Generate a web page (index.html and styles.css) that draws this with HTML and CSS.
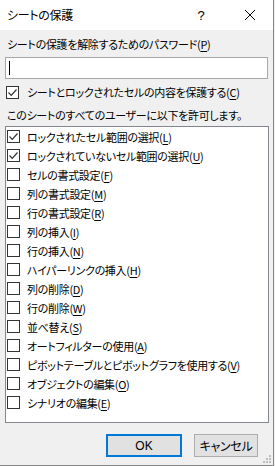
FILE: index.html
```html
<!DOCTYPE html>
<html lang="ja">
<head>
<meta charset="utf-8">
<link rel="stylesheet" href="styles.css">
</head>
<body>
<div class="window">
  <div class="titlebar">
    <span class="title">シートの保護</span>
    <span class="help">?</span>
    <span class="close">
      <svg width="12" height="12" viewBox="0 0 12 12"><path d="M1 1 L11 11 M11 1 L1 11" stroke="#000" stroke-width="1" fill="none"/></svg>
    </span>
  </div>
  <div class="content">
    <div class="label">シートの保護を解除するためのパスワード(<u>P</u>)</div>
    <div class="input"><span class="caret"></span></div>
    <label class="check-row top-check">
      <span class="box checked"><svg width="11" height="11" viewBox="0 0 11 11"><path d="M1.5 5.5 L4.2 8.3 L9.5 2.5" stroke="#333" stroke-width="1.2" fill="none"/></svg></span>
      <span class="text">シートとロックされたセルの内容を保護する(<u>C</u>)</span>
    </label>
    <div class="label allow">このシートのすべてのユーザーに以下を許可します。</div>
    <div class="list">
      <div class="item"><span class="box checked"><svg width="11" height="11" viewBox="0 0 11 11"><path d="M1.5 5.5 L4.2 8.3 L9.5 2.5" stroke="#333" stroke-width="1.2" fill="none"/></svg></span><span class="text">ロックされたセル範囲の選択(<u>L</u>)</span></div>
      <div class="item"><span class="box checked"><svg width="11" height="11" viewBox="0 0 11 11"><path d="M1.5 5.5 L4.2 8.3 L9.5 2.5" stroke="#333" stroke-width="1.2" fill="none"/></svg></span><span class="text">ロックされていないセル範囲の選択(<u>U</u>)</span></div>
      <div class="item"><span class="box"></span><span class="text">セルの書式設定(<u>F</u>)</span></div>
      <div class="item"><span class="box"></span><span class="text">列の書式設定(<u>M</u>)</span></div>
      <div class="item"><span class="box"></span><span class="text">行の書式設定(<u>R</u>)</span></div>
      <div class="item"><span class="box"></span><span class="text">列の挿入(<u>I</u>)</span></div>
      <div class="item"><span class="box"></span><span class="text">行の挿入(<u>N</u>)</span></div>
      <div class="item"><span class="box"></span><span class="text">ハイパーリンクの挿入(<u>H</u>)</span></div>
      <div class="item"><span class="box"></span><span class="text">列の削除(<u>D</u>)</span></div>
      <div class="item"><span class="box"></span><span class="text">行の削除(<u>W</u>)</span></div>
      <div class="item"><span class="box"></span><span class="text">並べ替え(<u>S</u>)</span></div>
      <div class="item"><span class="box"></span><span class="text">オートフィルターの使用(<u>A</u>)</span></div>
      <div class="item"><span class="box"></span><span class="text">ピボットテーブルとピボットグラフを使用する(<u>V</u>)</span></div>
      <div class="item"><span class="box"></span><span class="text">オブジェクトの編集(<u>O</u>)</span></div>
      <div class="item"><span class="box"></span><span class="text">シナリオの編集(<u>E</u>)</span></div>
    </div>
    <div class="buttons">
      <div class="btn default">OK</div>
      <div class="btn">キャンセル</div>
    </div>
  </div>
  <svg class="grip" width="10" height="10" viewBox="0 0 10 10">
    <rect x="7" y="1" width="2" height="2" fill="#bfbfbf"/>
    <rect x="4" y="4" width="2" height="2" fill="#bfbfbf"/>
    <rect x="7" y="4" width="2" height="2" fill="#bfbfbf"/>
    <rect x="1" y="7" width="2" height="2" fill="#bfbfbf"/>
    <rect x="4" y="7" width="2" height="2" fill="#bfbfbf"/>
    <rect x="7" y="7" width="2" height="2" fill="#bfbfbf"/>
  </svg>
</div>
</body>
</html>
```
FILE: styles.css
```css
html, body {
  margin: 0;
  padding: 0;
  background: #f0f0f0;
}
body {
  font-family: "Noto Sans CJK JP", "Noto Sans", sans-serif;
  font-size: 11px;
  letter-spacing: -0.3px;
  font-feature-settings: "palt";
  color: #000;
}
u {
  text-decoration: underline;
  text-underline-offset: 2px;
  text-decoration-thickness: 1px;
}
.window {
  position: relative;
  width: 274px;
  height: 466px;
  box-sizing: border-box;
  border-right: 1px solid #858585;
  border-bottom: 1px solid #858585;
  background: #f0f0f0;
  display: flex;
  flex-direction: column;
}
.titlebar {
  height: 30px;
  background: #fff;
  display: flex;
  align-items: center;
  flex-shrink: 0;
}
.title {
  margin-left: 7px;
  flex: 1;
  line-height: 16px;
  font-size: 12px;
}
.help {
  width: 14px;
  font-family: "Liberation Sans", sans-serif;
  font-size: 13px;
  margin-right: 36px;
  text-align: center;
}
.close {
  width: 12px;
  height: 12px;
  margin-right: 17px;
  display: flex;
}
.content {
  display: flex;
  flex-direction: column;
  padding: 0 5px;
}
.label {
  margin-left: 2px;
  height: 16px;
  line-height: 16px;
  margin-top: 6px;
  white-space: nowrap;
}
.input {
  margin-top: 5px;
  height: 22px;
  width: 263px;
  box-sizing: border-box;
  border: 1px solid #a8a8a8;
  background: #fff;
  display: flex;
  align-items: center;
}
.caret {
  width: 1px;
  height: 14px;
  background: #000;
  margin-left: 3px;
}
.check-row {
  display: flex;
  align-items: center;
  height: 16px;
  margin-top: 5px;
  margin-left: 1px;
}
.box {
  width: 13px;
  height: 13px;
  box-sizing: border-box;
  border: 1px solid #333;
  background: #fff;
  display: flex;
  align-items: center;
  justify-content: center;
  flex-shrink: 0;
}
.text {
  margin-left: 8px;
  line-height: 16px;
  white-space: nowrap;
}
.allow {
  margin-top: 7px;
}
.list {
  margin-top: 3px;
  width: 264px;
  height: 297px;
  box-sizing: border-box;
  border: 1px solid #828790;
  background: #fff;
}
.item {
  display: flex;
  align-items: center;
  height: 19px;
  padding-left: 1px;
}
.item .text {
  margin-left: 7px;
}
.buttons {
  display: flex;
  justify-content: flex-end;
  gap: 12px;
  margin-top: 11px;
  padding-right: 10px;
}
.btn {
  height: 23px;
  box-sizing: border-box;
  border: 1px solid #adadad;
  background: #e1e1e1;
  display: flex;
  align-items: center;
  justify-content: center;
  width: 64px;
  font-size: 12px;
}
.btn.default {
  width: 76px;
  border: 2px solid #0078d7;
  font-family: "Liberation Sans", sans-serif;
  letter-spacing: 0;
}
.grip {
  position: absolute;
  right: 1px;
  bottom: 1px;
}
```
